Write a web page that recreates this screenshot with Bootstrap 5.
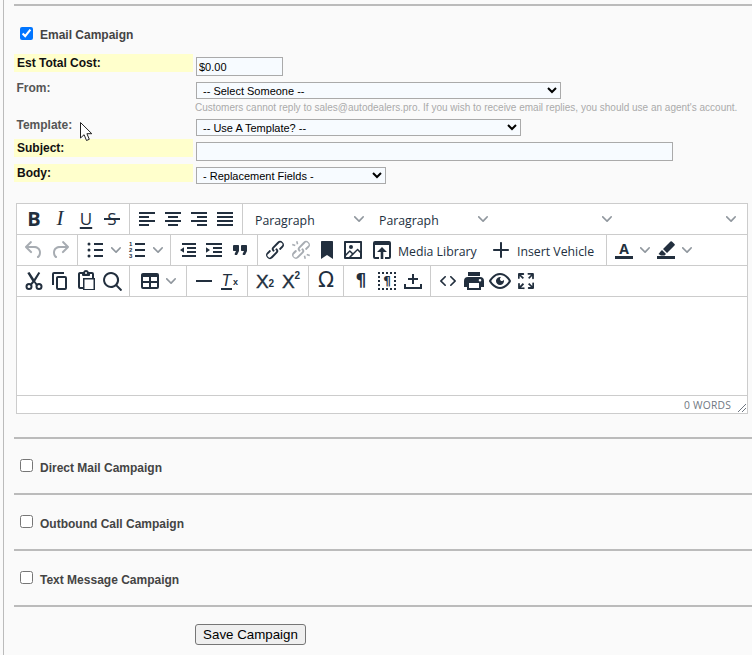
<!DOCTYPE html>
<html lang="en">
<head>
<meta charset="utf-8">
<title>Campaign</title>
<link href="https://cdn.jsdelivr.net/npm/bootstrap@5.3.0/dist/css/bootstrap.min.css" rel="stylesheet">
<style>
html,body{height:100%;background:#fafafa;overflow:hidden}
body{font-family:"Liberation Sans",Arial,sans-serif;font-size:12px;color:#444;position:relative}
.pg{margin-left:3px;border-left:1px solid #bbb;padding:4px 0 0 10px;min-height:100%}
.rule{border-top:2px solid #bbb}
.camp-row{height:54px;padding-left:6px;padding-top:20px;gap:7px}
.camp-first{height:48px;padding-top:21px;padding-left:6px;gap:7px}
.camp-row input,.camp-first input{width:13px;height:13px;margin:0}
.camp-lbl{font-weight:700;line-height:14px;position:relative;top:1px}
.camp-row .camp-lbl{top:2px}
.f-row{min-height:25px}
.f-row-t{min-height:23px}
.f-lbl{width:179px;height:18px;line-height:18px;font-weight:700;padding-left:2.5px;flex:none;margin-right:3px;color:#555}
.hl{background:#ffc;color:#111;padding-left:3px}
.fld{padding-top:3px}
.fld input,.fld select{display:block;background-color:#f7fbff;border:1px solid #aaa;font-size:11px;font-family:"Liberation Sans",Arial,sans-serif;color:#000;border-radius:0;outline:0}
.fld input{height:19px;padding:0 2px}
.fld select{height:17px;padding:0 2px}
.w-cost{width:87px}.w-from{width:365px}.w-tpl{width:325px}.w-subj{width:477px}.w-body{width:190px}
.note{font-size:10px;line-height:12px;color:#aaa;margin:3px 0 2px -1px;white-space:nowrap}
.ed{margin:14px 0 0 2px;width:732px;border:1px solid #ccc;background:#fff;font-family:"Open Sans",sans-serif;color:#222f3e}
.tb-row{height:31px;border-bottom:1px solid #ccc}
.tb-g{height:30px;padding:0 4px;border-right:1px solid #ccc;display:flex;align-items:center;flex:none}
.tb-g.last{border-right:0}
.ib{width:26px;height:24px;display:flex;align-items:center;justify-content:center;flex:none;font-family:"Liberation Sans",sans-serif;position:relative}
.ib svg{width:24px;height:24px;fill:#222f3e;flex:none}
.off svg{fill:#222f3e66}
.chev{width:16px;height:24px;display:flex;align-items:center;justify-content:center;flex:none}
.chev svg{width:10px;height:10px;fill:#222f3e80}
.sel{width:124px;height:30px;flex:none;display:flex;align-items:center;justify-content:space-between;padding:4px 3px 0 12px;font-size:12.3px}
.sel svg{width:10px;height:10px;fill:#222f3e80;flex:none;position:relative;top:-2px}
.txt-btn{display:flex;align-items:center;padding:0 0 0 3px;font-size:12.300px;gap:3px;white-space:nowrap}
.txt-a{width:119px}.txt-b{width:117px}
.txt-l{position:relative;top:2px}
.gap3{width:3px;flex:none}
.t-b{font-weight:700;font-size:20px;font-family:"Open Sans",sans-serif}
.t-i{font-style:italic;font-size:21px;font-family:"Liberation Serif",serif}
.t-u{font-size:17px;text-decoration:underline;text-underline-offset:2px;text-decoration-thickness:2px;font-family:"Open Sans",sans-serif}
.t-s{font-size:17px;font-family:"Open Sans",sans-serif}
.t-s::after{content:"";position:absolute;left:5px;right:5px;top:11px;height:2px;background:#222f3e}
.t-a{font-weight:700;font-size:14px;line-height:14px;border-bottom:3px solid #222f3e;width:18px;text-align:center;font-family:"Open Sans",sans-serif}
.t-x{font-size:19px;font-weight:400;line-height:1;-webkit-text-stroke:.4px #222f3e}
.t-x sub,.t-x sup{font-size:10px;font-weight:700;-webkit-text-stroke:0}
.t-o{font-size:21px;font-family:"DejaVu Sans",sans-serif}
.t-p{font-size:17px;font-weight:700;font-family:"DejaVu Sans",sans-serif}
.t-d{font-size:12px;font-weight:700;font-family:"DejaVu Sans",sans-serif;border:2px dotted #222f3e;width:18px;height:18px;line-height:14px;text-align:center}
.t-tx{font-size:16px;font-style:italic;font-family:"Liberation Sans",sans-serif;border-bottom:2px solid #222f3e;line-height:15px;width:11px;text-align:center;position:relative;left:-1px}
.t-tx-s{font-size:9px;font-weight:700;align-self:flex-end;margin:0 0 4px 0}
.ed-area{height:99px;border-bottom:1px solid #ccc}
.ed-st{height:17px;padding-right:16px;font-size:10.300px;color:#6f7782;line-height:18px;letter-spacing:.2px;position:relative}
.grip{position:absolute;right:0;bottom:0;width:10px;height:10px;stroke:#6f7782;stroke-width:1;fill:none}
.rule-ed{margin-top:23px}
.save{margin:17px 0 0 181px;padding:0;width:111px;height:21px;background:#efefef;border:1px solid #767676;border-radius:3px;font-size:13.333px;line-height:17px;color:#000;font-family:"Liberation Sans",Arial,sans-serif}
.ptr{position:absolute;left:80px;top:122px;width:14px;height:20px}
</style>
</head>
<body>
<svg class="d-none" xmlns="http://www.w3.org/2000/svg">
<symbol id="i-al" viewBox="0 0 24 24"><path d="M4 5h16v2H4zM4 9h10v2H4zM4 13h16v2H4zM4 17h10v2H4z"/></symbol>
<symbol id="i-ac" viewBox="0 0 24 24"><path d="M4 5h16v2H4zM7 9h10v2H7zM4 13h16v2H4zM7 17h10v2H7z"/></symbol>
<symbol id="i-ar" viewBox="0 0 24 24"><path d="M4 5h16v2H4zM10 9h10v2H10zM4 13h16v2H4zM10 17h10v2H10z"/></symbol>
<symbol id="i-aj" viewBox="0 0 24 24"><path d="M4 5h16v2H4zM4 9h16v2H4zM4 13h16v2H4zM4 17h16v2H4z"/></symbol>
<symbol id="i-undo" viewBox="0 0 24 24"><path d="M6.4 8H12c3.7 0 6.2 2 6.8 5.1.6 2.7-.4 5.6-2.3 6.8a1 1 0 0 1-1-1.8c1.1-.6 1.8-2.7 1.4-4.6-.5-2.1-2.1-3.5-4.9-3.5H6.4l3.3 3.3a1 1 0 1 1-1.4 1.4l-5-5a1 1 0 0 1 0-1.4l5-5a1 1 0 0 1 1.4 1.4L6.4 8z"/></symbol>
<symbol id="i-redo" viewBox="0 0 24 24"><path transform="matrix(-1 0 0 1 24 0)" d="M6.4 8H12c3.7 0 6.2 2 6.8 5.1.6 2.7-.4 5.6-2.3 6.8a1 1 0 0 1-1-1.8c1.1-.6 1.8-2.7 1.4-4.6-.5-2.1-2.1-3.5-4.9-3.5H6.4l3.3 3.3a1 1 0 1 1-1.4 1.4l-5-5a1 1 0 0 1 0-1.4l5-5a1 1 0 0 1 1.4 1.4L6.4 8z"/></symbol>
<symbol id="i-ul" viewBox="0 0 24 24"><path d="M11 5h9v2h-9zM11 11h9v2h-9zM11 17h9v2h-9z"/><circle cx="6" cy="6" r="1.5"/><circle cx="6" cy="12" r="1.5"/><circle cx="6" cy="18" r="1.5"/></symbol>
<symbol id="i-ol" viewBox="0 0 24 24"><path d="M10 5h10v2H10zM10 11h10v2H10zM10 17h10v2H10z"/><text x="4" y="8" font-size="6" font-weight="700" font-family="Liberation Sans">1</text><text x="4" y="14" font-size="6" font-weight="700" font-family="Liberation Sans">2</text><text x="4" y="20" font-size="6" font-weight="700" font-family="Liberation Sans">3</text></symbol>
<symbol id="i-out" viewBox="0 0 24 24"><path d="M6 5h14v2H6zM11 9h9v2h-9zM11 13h9v2h-9zM6 17h14v2H6zM8 9.2v5.6L4 12z"/></symbol>
<symbol id="i-in" viewBox="0 0 24 24"><path d="M4 5h16v2H4zM11 9h9v2h-9zM11 13h9v2h-9zM4 17h16v2H4zM4 9.2v5.6L8 12z"/></symbol>
<symbol id="i-bq" viewBox="0 0 24 24"><path d="M7.5 17h.9c.4 0 .7-.2.9-.6L11 13V8c0-.6-.4-1-1-1H6a1 1 0 0 0-1 1v4c0 .6.4 1 1 1h2l-1.3 2.7a1 1 0 0 0 .8 1.3zm8 0h.9c.4 0 .7-.2.9-.6L19 13V8c0-.6-.4-1-1-1h-4a1 1 0 0 0-1 1v4c0 .6.4 1 1 1h2l-1.3 2.7a1 1 0 0 0 .8 1.3z"/></symbol>
<symbol id="i-link" viewBox="0 0 24 24"><path d="M6.2 12.3a1 1 0 0 1 1.4 1.4l-2.1 2a2 2 0 1 0 2.7 2.8l4.8-4.8a1 1 0 0 0 0-1.4 1 1 0 1 1 1.4-1.3 2.9 2.9 0 0 1 0 4L9.6 20a3.9 3.9 0 0 1-5.5-5.5l2-2zm11.6-.6a1 1 0 0 1-1.4-1.4l2-2a2 2 0 1 0-2.6-2.8L11 10.3a1 1 0 0 0 0 1.4A1 1 0 1 1 9.6 13a2.9 2.9 0 0 1 0-4L14.4 4a3.9 3.9 0 0 1 5.5 5.5l-2 2z"/></symbol>
<symbol id="i-unlink" viewBox="0 0 24 24"><path d="M6.2 12.3a1 1 0 0 1 1.4 1.4l-2 2a2 2 0 1 0 2.6 2.8l4.8-4.8a1 1 0 0 0 0-1.4 1 1 0 1 1 1.4-1.3 2.9 2.9 0 0 1 0 4l-4.8 4.8a3.9 3.9 0 0 1-5.5-5.5l2-2zm11.6-.6a1 1 0 0 1-1.4-1.4l2.1-2a2 2 0 1 0-2.7-2.8l-4.8 4.8a1 1 0 0 0 0 1.4 1 1 0 1 1-1.4 1.3 2.9 2.9 0 0 1 0-4L14.4 4a3.9 3.9 0 0 1 5.5 5.5l-2 2zM7 3.5l1.5-.4.8 3-1.5.4zM3 7.2l.5-1.5 3 1-.5 1.5zM17 20.5l-1.5.4-.8-3 1.5-.4zM21 16.8l-.5 1.5-3-1 .5-1.5z"/></symbol>
<symbol id="i-bm" viewBox="0 0 24 24"><path d="M7 3h10c.6 0 1 .4 1 1v17l-6-4-6 4V4c0-.6.4-1 1-1z"/></symbol>
<symbol id="i-img" viewBox="0 0 24 24"><path d="M5 15.7l3.3-3.2c.3-.3.7-.3 1 0L12 15l4.1-4c.3-.4.8-.4 1 0l2 1.9V5H5v10.7zM5 18V19h3l2.8-2.9-2-2L5 17.9zm14-3l-2.5-2.4-6.4 6.5H19v-4zM4 3h16c.6 0 1 .4 1 1v16c0 .6-.4 1-1 1H4a1 1 0 0 1-1-1V4c0-.6.4-1 1-1zm6 8a2 2 0 1 0 0-4 2 2 0 0 0 0 4z"/></symbol>
<symbol id="i-media" viewBox="0 0 24 24"><path fill-rule="evenodd" d="M5 3h14a2 2 0 0 1 2 2v14a2 2 0 0 1-2 2h-4v-2h4V7H5v12h4v2H5a2 2 0 0 1-2-2V5a2 2 0 0 1 2-2z"/><path d="M12 9l5 5h-3.700v7h-2.600v-7H7z"/></symbol>
<symbol id="i-plus" viewBox="0 0 24 24"><path d="M12 4c.5 0 1 .4 1 .9V11h6a1 1 0 0 1 .1 2H13v6a1 1 0 0 1-2 .1V13H5a1 1 0 0 1-.1-2H11V5c0-.6.4-1 1-1z"/></symbol>
<symbol id="i-pen" viewBox="0 0 24 24"><path d="M16.500 3.500a1 1 0 0 1 1.400 0l2.600 2.600a1 1 0 0 1 0 1.400L13 15l-4-4zM8 12l4 4-1.500 1.500H7L4.500 16l.5-.5 1.500-2zM3 18h18v3H3z"/></symbol>
<symbol id="i-cut" viewBox="0 0 24 24"><path d="M7.500 3l4.500 7 4.500-7 1.700 1-5 8.200 2.600 3.400-1.600 1.200L12 13.600l-2.700 3.200-1.600-1.200 2.600-3.400-5-8.200z"/><path fill-rule="evenodd" d="M7 14a3.500 3.500 0 1 1 0 7 3.500 3.500 0 0 1 0-7zm0 2a1.500 1.500 0 1 0 0 3 1.500 1.500 0 0 0 0-3zM17 14a3.500 3.500 0 1 1 0 7 3.500 3.500 0 0 1 0-7zm0 2a1.500 1.500 0 1 0 0 3 1.500 1.500 0 0 0 0-3z"/></symbol>
<symbol id="i-copy" viewBox="0 0 24 24"><path d="M16 3H6a2 2 0 0 0-2 2v11h2V5h10V3zm1 4a2 2 0 0 1 2 2v10a2 2 0 0 1-2 2h-7a2 2 0 0 1-2-2V9c0-1.200.9-2 2-2h7zm0 12V9h-7v10h7z"/></symbol>
<symbol id="i-paste" viewBox="0 0 24 24"><path d="M18 9V5h-2v1c0 .6-.4 1-1 1H9a1 1 0 0 1-1-1V5H6v13h3V9h9zM9 20H6a2 2 0 0 1-2-2V5c0-1.100.9-2 2-2h3.200A3 3 0 0 1 12 1a3 3 0 0 1 2.800 2H18a2 2 0 0 1 2 2v4h1v12H9v-1zm1.500 0h9v-9.500h-9V20zM12 3a1 1 0 1 0 0 2 1 1 0 0 0 0-2z"/></symbol>
<symbol id="i-find" viewBox="0 0 24 24"><path d="M16 17.300a8 8 0 1 1 1.400-1.400l4.300 4.400a1 1 0 0 1-1.400 1.400l-4.400-4.400zm-5-.3a6 6 0 1 0 0-12 6 6 0 0 0 0 12z"/></symbol>
<symbol id="i-tbl" viewBox="0 0 24 24"><path d="M19 4a2 2 0 0 1 2 2v12a2 2 0 0 1-2 2H5a2 2 0 0 1-2-2V6c0-1.100.9-2 2-2h14zM5 14v4h6v-4H5zm14 0h-6v4h6v-4zm0-6h-6v4h6V8zM5 12h6V8H5v4z"/></symbol>
<symbol id="i-hr" viewBox="0 0 24 24"><path d="M4 11h16v2H4z"/></symbol>
<symbol id="i-pb" viewBox="0 0 24 24"><path d="M11 5h2v4h4v2h-4v4h-2v-4H7V9h4zM3 15h2v3h14v-3h2v5H3z"/></symbol>
<symbol id="i-code" viewBox="0 0 24 24"><path d="M9.800 15.700c.3.300.3.800 0 1-.3.400-.9.400-1.200 0l-4.400-4.100a.8.800 0 0 1 0-1.200l4.400-4.200c.3-.3.900-.3 1.200 0 .3.300.3.800 0 1.100L6 12l3.800 3.700zm4.400 0L18 12l-3.800-3.700a.8.800 0 0 1 0-1.100c.3-.3.900-.3 1.200 0l4.400 4.200c.3.300.3.900 0 1.200l-4.400 4.100c-.3.400-.9.400-1.200 0a.8.800 0 0 1 0-1z"/></symbol>
<symbol id="i-print" viewBox="0 0 24 24"><path fill-rule="evenodd" d="M6 8h12a4 4 0 0 1 4 4v6h-3v3H5v-3H2v-6a4 4 0 0 1 4-4zm1 6v5h10v-5zm11-4a1.300 1.300 0 1 0 0 2.600 1.300 1.300 0 0 0 0-2.600zM6 3h12v4H6z"/></symbol>
<symbol id="i-eye" viewBox="0 0 24 24"><path d="M3.500 12.500c.5.800 1.100 1.600 1.800 2.300 2 2 4.200 3.200 6.700 3.200s4.700-1.200 6.700-3.200a16.200 16.200 0 0 0 2.100-2.800 15.700 15.700 0 0 0-2.100-2.800c-2-2-4.200-3.200-6.700-3.200a9.300 9.300 0 0 0-6.700 3.200A16.200 16.200 0 0 0 3.200 12c0 .2.200.3.300.5zm-2.400-1l.7-1.200L4 7.800C6.200 5.400 8.900 4 12 4c3 0 5.800 1.400 8.100 3.800a18.200 18.200 0 0 1 2.800 3.700v1l-.7 1.200-2.100 2.500c-2.300 2.400-5 3.800-8.100 3.800-3 0-5.800-1.400-8.100-3.800a18.200 18.200 0 0 1-2.800-3.700 1 1 0 0 1 0-1zm12-3.300a2 2 0 1 0 2.700 2.600 4 4 0 1 1-2.600-2.600z"/></symbol>
<symbol id="i-fs" viewBox="0 0 24 24"><path d="M15.300 10l-1.200-1.300 2.900-3h-2.300a.9.900 0 1 1 0-1.700H19c.5 0 .9.400.9.900v4.400a.9.900 0 1 1-1.800 0V7l-2.900 3zm0 4l3 3v-2.300a.9.900 0 1 1 1.700 0V19c0 .5-.4.900-.9.900h-4.400a.9.900 0 1 1 0-1.800H17l-3-2.900 1.300-1.200zM10 15.400l-2.900 3h2.300a.9.900 0 1 1 0 1.700H5a.9.900 0 0 1-.9-.9v-4.400a.9.900 0 1 1 1.800 0V17l2.900-3 1.200 1.300zM8.700 10L5.700 7v2.300a.9.900 0 0 1-1.700 0V5c0-.5.400-.9.900-.9h4.400a.9.900 0 0 1 0 1.800H7l3 2.900-1.300 1.200z"/></symbol>
<symbol id="i-ch" viewBox="0 0 10 10"><path d="M8.700 2.200c.3-.3.800-.3 1 0 .4.400.4.900 0 1.200L5.700 7.800c-.3.300-.9.300-1.200 0L.2 3.400a.8.800 0 0 1 0-1.200c.3-.3.800-.3 1.100 0L5 6l3.700-3.800z"/></symbol>
</svg>

<div class="pg">
  <div class="rule"></div>
  <div class="camp-first d-flex align-items-start">
    <input type="checkbox" checked>
    <label class="camp-lbl">Email Campaign</label>
  </div>

  <div class="f-row d-flex">
    <div class="f-lbl hl">Est Total Cost:</div>
    <div class="fld"><input class="w-cost" type="text" value="$0.00"></div>
  </div>
  <div class="f-row d-flex">
    <div class="f-lbl">From:</div>
    <div class="fld">
      <select class="w-from"><option>-- Select Someone --</option></select>
      <div class="note">Customers cannot reply to sales@autodealers.pro. If you wish to receive email replies, you should use an agent's account.</div>
    </div>
  </div>
  <div class="f-row f-row-t d-flex">
    <div class="f-lbl">Template:</div>
    <div class="fld"><select class="w-tpl"><option>-- Use A Template? --</option></select></div>
  </div>
  <div class="f-row d-flex">
    <div class="f-lbl hl">Subject:</div>
    <div class="fld"><input class="w-subj" type="text"></div>
  </div>
  <div class="f-row d-flex">
    <div class="f-lbl hl">Body:</div>
    <div class="fld"><select class="w-body"><option>- Replacement Fields -</option></select></div>
  </div>

  <div class="ed">
    <div class="tb-row d-flex">
      <div class="tb-g">
        <span class="ib t-b">B</span><span class="ib t-i">I</span><span class="ib t-u">U</span><span class="ib t-s">S</span>
      </div>
      <div class="tb-g">
        <span class="ib"><svg><use href="#i-al"/></svg></span><span class="ib"><svg><use href="#i-ac"/></svg></span><span class="ib"><svg><use href="#i-ar"/></svg></span><span class="ib"><svg><use href="#i-aj"/></svg></span>
      </div>
      <div class="sel"><span>Paragraph</span><svg><use href="#i-ch"/></svg></div>
      <div class="sel"><span>Paragraph</span><svg><use href="#i-ch"/></svg></div>
      <div class="sel"><span></span><svg><use href="#i-ch"/></svg></div>
      <div class="sel"><span></span><svg><use href="#i-ch"/></svg></div>
    </div>
    <div class="tb-row d-flex">
      <div class="tb-g">
        <span class="ib off"><svg><use href="#i-undo"/></svg></span><span class="ib off"><svg><use href="#i-redo"/></svg></span>
      </div>
      <div class="tb-g">
        <span class="ib"><svg><use href="#i-ul"/></svg></span><span class="chev"><svg><use href="#i-ch"/></svg></span>
        <span class="ib"><svg><use href="#i-ol"/></svg></span><span class="chev"><svg><use href="#i-ch"/></svg></span>
      </div>
      <div class="tb-g">
        <span class="ib"><svg><use href="#i-out"/></svg></span><span class="ib"><svg><use href="#i-in"/></svg></span><span class="ib"><svg><use href="#i-bq"/></svg></span>
      </div>
      <div class="tb-g">
        <span class="ib"><svg><use href="#i-link"/></svg></span><span class="ib off"><svg><use href="#i-unlink"/></svg></span><span class="ib"><svg><use href="#i-bm"/></svg></span><span class="ib"><svg><use href="#i-img"/></svg></span>
        <span class="txt-btn txt-a"><span class="ib"><svg><use href="#i-media"/></svg></span><span class="txt-l">Media Library</span></span>
        <span class="txt-btn txt-b"><span class="ib"><svg><use href="#i-plus"/></svg></span><span class="txt-l">Insert Vehicle</span></span>
      </div>
      <div class="tb-g last">
        <span class="ib"><span class="t-a">A</span></span><span class="chev"><svg><use href="#i-ch"/></svg></span>
        <span class="ib"><svg><use href="#i-pen"/></svg></span><span class="chev"><svg><use href="#i-ch"/></svg></span>
      </div>
    </div>
    <div class="tb-row d-flex">
      <div class="tb-g">
        <span class="ib"><svg><use href="#i-cut"/></svg></span><span class="ib"><svg><use href="#i-copy"/></svg></span><span class="ib"><svg><use href="#i-paste"/></svg></span><span class="ib"><svg><use href="#i-find"/></svg></span>
      </div>
      <div class="tb-g">
        <span class="gap3"></span><span class="ib"><svg><use href="#i-tbl"/></svg></span><span class="chev"><svg><use href="#i-ch"/></svg></span><span class="gap3"></span>
      </div>
      <div class="tb-g">
        <span class="ib"><svg><use href="#i-hr"/></svg></span><span class="ib"><span class="t-tx">T</span><span class="t-tx-s">x</span></span>
      </div>
      <div class="tb-g">
        <span class="ib t-x">X<sub>2</sub></span><span class="ib t-x">X<sup>2</sup></span>
      </div>
      <div class="tb-g">
        <span class="ib t-o">Ω</span>
      </div>
      <div class="tb-g">
        <span class="ib t-p">¶</span><span class="ib"><span class="t-d">¶</span></span><span class="ib"><svg><use href="#i-pb"/></svg></span>
      </div>
      <div class="tb-g last">
        <span class="ib"><svg><use href="#i-code"/></svg></span><span class="ib"><svg><use href="#i-print"/></svg></span><span class="ib"><svg><use href="#i-eye"/></svg></span><span class="ib"><svg><use href="#i-fs"/></svg></span>
      </div>
    </div>
    <div class="ed-area"></div>
    <div class="ed-st text-end">0 WORDS
      <svg class="grip" viewBox="0 0 10 10"><path d="M9 1L1 9M9 5L5 9"/></svg>
    </div>
  </div>

  <div class="rule rule-ed"></div>
  <div class="camp-row d-flex align-items-start"><input type="checkbox"><label class="camp-lbl">Direct Mail Campaign</label></div>
  <div class="rule"></div>
  <div class="camp-row d-flex align-items-start"><input type="checkbox"><label class="camp-lbl">Outbound Call Campaign</label></div>
  <div class="rule"></div>
  <div class="camp-row d-flex align-items-start"><input type="checkbox"><label class="camp-lbl">Text Message Campaign</label></div>
  <div class="rule"></div>
  <button type="button" class="save">Save Campaign</button>
</div>

<svg class="ptr" viewBox="0 0 14 20"><path d="M.5.500v15.500l3.600-3.300 2.400 5.800 2.800-1.200-2.400-5.600h4.900z" fill="#fff" stroke="#222" stroke-width="1"/></svg>
</body>
</html>
